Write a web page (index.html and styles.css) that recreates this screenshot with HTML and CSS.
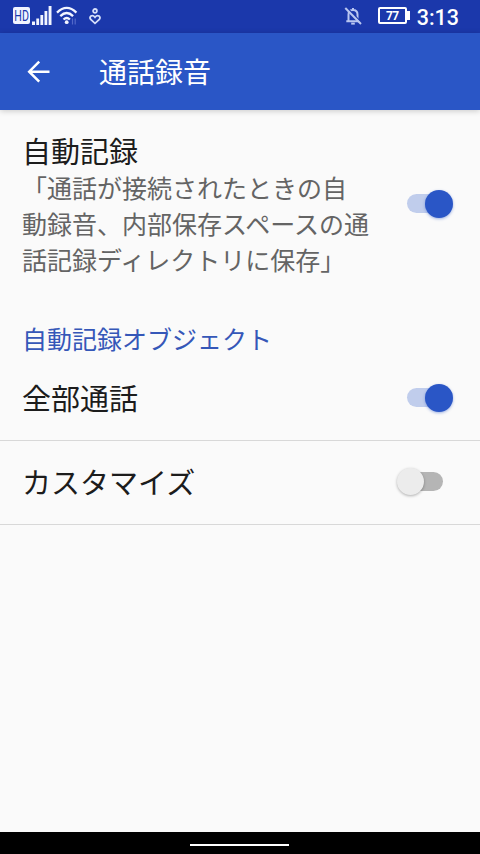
FILE: index.html
```html
<!DOCTYPE html>
<html lang="ja">
<head>
<meta charset="utf-8">
<title>通話録音</title>
<link rel="stylesheet" href="styles.css">
</head>
<body>
<div class="screen">
  <div class="status">
    <div class="status-left">
      <span class="hd"><b>HD</b></span>
      <svg class="signal" width="20" height="20" viewBox="0 0 20 20" fill="#f2f5ff"><path d="M0 15.500h3V19H0zM4.300 12.500h2.800V19H4.300zM8.400 9h2.800v10H8.400zM12.500 5h2.800v14h-2.800zM16.600 0h2.900v19h-2.900z"/></svg>
      <svg class="wifi" width="22" height="20" viewBox="0 0 22 20" fill="none" stroke="#f2f5ff" stroke-width="2.300"><path d="M1 6.600Q10.700-2.800 20.400 6.600M4.300 10.100Q10.700 4 17.100 10.100M7.500 13.500Q10.700 10.600 13.900 13.500"/><circle cx="10.700" cy="16.200" r="1.900" fill="#f2f5ff" stroke="none"/><path stroke="#5268c8" stroke-width="1.200" d="M16.500 12.500v6M19.200 12.500v6"/></svg>
      <svg class="care" width="12" height="18" viewBox="0 0 12 18" fill="none" stroke="#d5defa" stroke-width="1.800"><circle cx="6" cy="2.900" r="1.900"/><path d="M6 9.300Q4 6.800 2 8Q.200 9.500 1.700 11.500L6 15.400 10.300 11.500Q11.800 9.500 10 8Q8 6.800 6 9.300z"/></svg>
    </div>
    <div class="status-right">
      <svg class="bell" width="18" height="20" viewBox="0 0 18 20" fill="none" stroke="#b9c6f1" stroke-width="2"><path d="M4.500 15V8.500Q4.500 4 9 4T13.500 8.500V15M2.300 15.200H15.700M9 2v2"/><path d="M7.200 17.600h3.600"/><path stroke="#1b38ab" stroke-width="1.500" d="M2.500 1.300L18 17"/><path d="M1.300 2L17 18"/></svg>
      <div class="battery"><span>77</span></div>
      <span class="time">3:13</span>
    </div>
  </div>
  <header class="bar">
    <svg class="back" width="24" height="24" viewBox="0 0 24 24" fill="none" stroke="#fff" stroke-width="2.500"><path d="M23.500 11.700H4M13.200 1.700L3.200 11.700l10 10"/></svg>
    <h1>通話録音</h1>
  </header>
  <main>
    <section class="row main-row">
      <div>
        <div class="label">自動記録</div>
        <p class="summary">「通話が接続されたときの自<br>動録音、内部保存スペースの通<br>話記録ディレクトリに保存」</p>
      </div>
      <div class="switch on"><i class="track"></i><i class="thumb"></i></div>
    </section>
    <h2>自動記録オブジェクト</h2>
    <section class="row all-row">
      <div class="label">全部通話</div>
      <div class="switch on"><i class="track"></i><i class="thumb"></i></div>
    </section>
    <section class="row custom-row">
      <div class="label">カスタマイズ</div>
      <div class="switch"><i class="track"></i><i class="thumb"></i></div>
    </section>
  </main>
  <footer class="nav"><div class="pill"></div></footer>
</div>
</body>
</html>
```
FILE: styles.css
```css
* { box-sizing: border-box; }
body {
  margin: 0;
  background: #fafafa;
  font-family: "Noto Sans CJK JP", sans-serif;
  color: #1c1c1c;
}
.screen {
  width: 480px;
  height: 854px;
  display: flex;
  flex-direction: column;
  overflow: hidden;
}
.status {
  height: 33px;
  background: #1b38ab;
  display: flex;
  justify-content: space-between;
  padding: 0 21px 0 13px;
}
.status-left, .status-right { display: flex; }
.hd {
  display: flex;
  justify-content: center;
  width: 17px;
  height: 17px;
  margin-top: 7px;
  border-radius: 2px;
  background: #f2f5ff;
  color: #1b38ab;
}
.hd b {
  font: 400 14px/18px Roboto, sans-serif;
  transform: scaleX(0.76);
}
.signal { margin: 6px 0 0 2px; }
.wifi { margin: 6px 0 0 4px; }
.care { margin: 8px 0 0 11px; }
.bell { margin: 6px 0 0; }
.battery {
  position: relative;
  width: 29px;
  height: 17px;
  margin: 7px 10px 0 16px;
  border: 2px solid #fff;
  border-radius: 2px;
  color: #fff;
  font: 700 12px/14px Roboto, sans-serif;
  letter-spacing: -0.8px;
  text-align: center;
}
.battery::after {
  content: "";
  position: absolute;
  left: 27px;
  top: 2px;
  width: 3px;
  height: 9px;
  background: #fff;
}
.time {
  color: #fff;
  font: 500 21.5px/35px Roboto, sans-serif;
}
.bar {
  position: relative;
  height: 77px;
  background: #2a56c6;
  display: flex;
  align-items: center;
  padding-left: 26px;
  box-shadow: 0 1px 6px rgba(0, 0, 0, 0.2);
}
h1 {
  margin: 0 0 2px 49px;
  color: #fff;
  font-size: 28px;
  line-height: 40px;
  font-weight: 400;
}
main { flex: 1; }
.row {
  display: flex;
  justify-content: space-between;
  align-items: center;
  padding: 0 26px 0 22px;
}
.main-row { height: 188px; padding-bottom: 1px; }
.label { font-size: 29px; line-height: 38px; }
.summary {
  margin: 0;
  color: #646464;
  font-size: 25px;
  line-height: 36px;
  white-space: nowrap;
}
h2 {
  margin: 21px 0 0;
  padding-left: 22px;
  color: #3557b8;
  font-size: 25px;
  line-height: 38px;
  font-weight: 400;
}
.all-row, .custom-row {
  height: 84px;
  padding-bottom: 2px;
  border-bottom: 1px solid #d8d8d8;
}
.all-row .label, .custom-row .label { margin-bottom: 2px; }
.switch {
  display: flex;
  align-items: center;
  width: 57px;
  height: 28px;
}
.track {
  width: 37px;
  height: 19px;
  margin-left: 9px;
  border-radius: 10px;
  background: #b5b5b5;
}
.thumb {
  width: 27px;
  height: 27px;
  margin-left: -46px;
  border-radius: 50%;
  background: #ececec;
  box-shadow: 0 1px 3px rgba(0, 0, 0, 0.3);
}
.on .track { margin-left: 10px; background: #c0cdec; }
.on .thumb {
  width: 28px;
  height: 28px;
  margin-left: -19px;
  background: #2a56c6;
  box-shadow: 0 1px 3px rgba(42, 86, 198, 0.45);
}
.nav {
  height: 22px;
  background: #000;
  display: flex;
  padding: 12px 0 0 190px;
}
.pill { width: 99px; height: 2px; background: #fff; }
```
